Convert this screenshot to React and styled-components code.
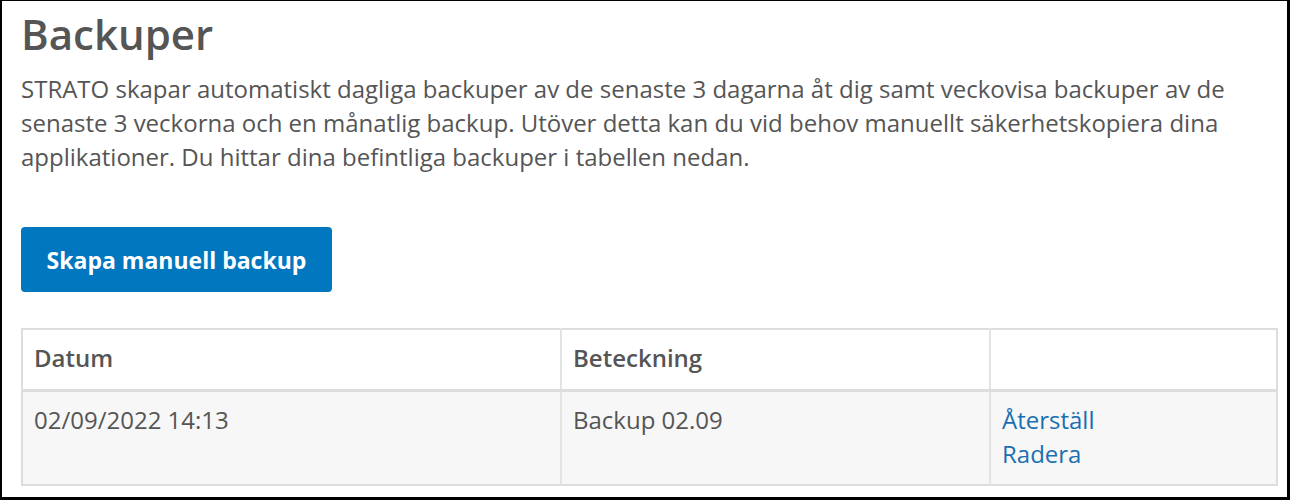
import React from "react";
import styled, { createGlobalStyle } from "styled-components";

const GlobalStyle = createGlobalStyle`
  html, body {
    margin: 0;
    padding: 0;
    background: #fff;
  }
  body {
    font-family: "Open Sans", "Liberation Sans", sans-serif;
    color: #555;
  }
`;

const rows = [
  { date: "02/09/2022 14:13", name: "Backup 02.09" },
];

function App() {
  return (
    <>
      <GlobalStyle />
      <Frame>
        <Title>Backuper</Title>
        <Intro>
          STRATO skapar automatiskt dagliga backuper av de senaste 3 dagarna åt dig samt
          veckovisa backuper av de senaste 3 veckorna och en månatlig backup. Utöver detta
          kan du vid behov manuellt säkerhetskopiera dina applikationer. Du hittar dina
          befintliga backuper i tabellen nedan.
        </Intro>
        <PrimaryButton>Skapa manuell backup</PrimaryButton>
        <Table>
          <colgroup>
            <col style={{ width: 539 }} />
            <col style={{ width: 429 }} />
            <col />
          </colgroup>
          <thead>
            <tr>
              <Th>Datum</Th>
              <Th>Beteckning</Th>
              <Th />
            </tr>
          </thead>
          <tbody>
            {rows.map((r) => (
              <tr key={r.date}>
                <Td>{r.date}</Td>
                <Td>{r.name}</Td>
                <Td>
                  <ActionLink href="#">Återställ</ActionLink>
                  <ActionLink href="#">Radera</ActionLink>
                </Td>
              </tr>
            ))}
          </tbody>
        </Table>
      </Frame>
    </>
  );
}

export default App;

const Frame = styled.div`
  box-sizing: border-box;
  width: 1290px;
  height: 500px;
  overflow: hidden;
  border-style: solid;
  border-color: #000;
  border-width: 1px 3px 3px 2px;
  padding: 0 9px 0 19px;
`;

const Title = styled.h1`
  margin: 0;
  padding-top: 7px;
  font-size: 42px;
  line-height: 52px;
  font-weight: 600;
  color: #555;
`;

const Intro = styled.p`
  margin: 12px 0 0;
  font-size: 24px;
  line-height: 34px;
  color: #555;
`;

const PrimaryButton = styled.button`
  display: block;
  margin-top: 53px;
  height: 65px;
  width: 311px;
  padding: 0;
  border: 0;
  border-radius: 4px;
  background: #0077bf;
  color: #fff;
  font-family: "Open Sans", "Liberation Sans", sans-serif;
  font-size: 23px;
  font-weight: 700;
  cursor: pointer;
`;

const Table = styled.table`
  margin-top: 36px;
  width: 1257px;
  border-collapse: collapse;
  table-layout: fixed;
  border: 2px solid #ddd;
`;

const Th = styled.th`
  text-align: left;
  font-weight: 600;
  font-size: 24px;
  line-height: 34px;
  color: #555;
  padding: 11px 11px 14px;
  border-left: 2px solid #e3e3e3;
  border-bottom: 3px solid #ddd;
  background: #fff;
  &:first-child {
    border-left: 0;
  }
`;

const Td = styled.td`
  vertical-align: top;
  font-size: 24px;
  line-height: 34px;
  color: #555;
  padding: 11px 11px 13px;
  border-left: 2px solid #e3e3e3;
  background: #f7f7f7;
  &:first-child {
    border-left: 0;
  }
`;

const ActionLink = styled.a`
  display: block;
  color: #1a6fb0;
  text-decoration: none;
`;
